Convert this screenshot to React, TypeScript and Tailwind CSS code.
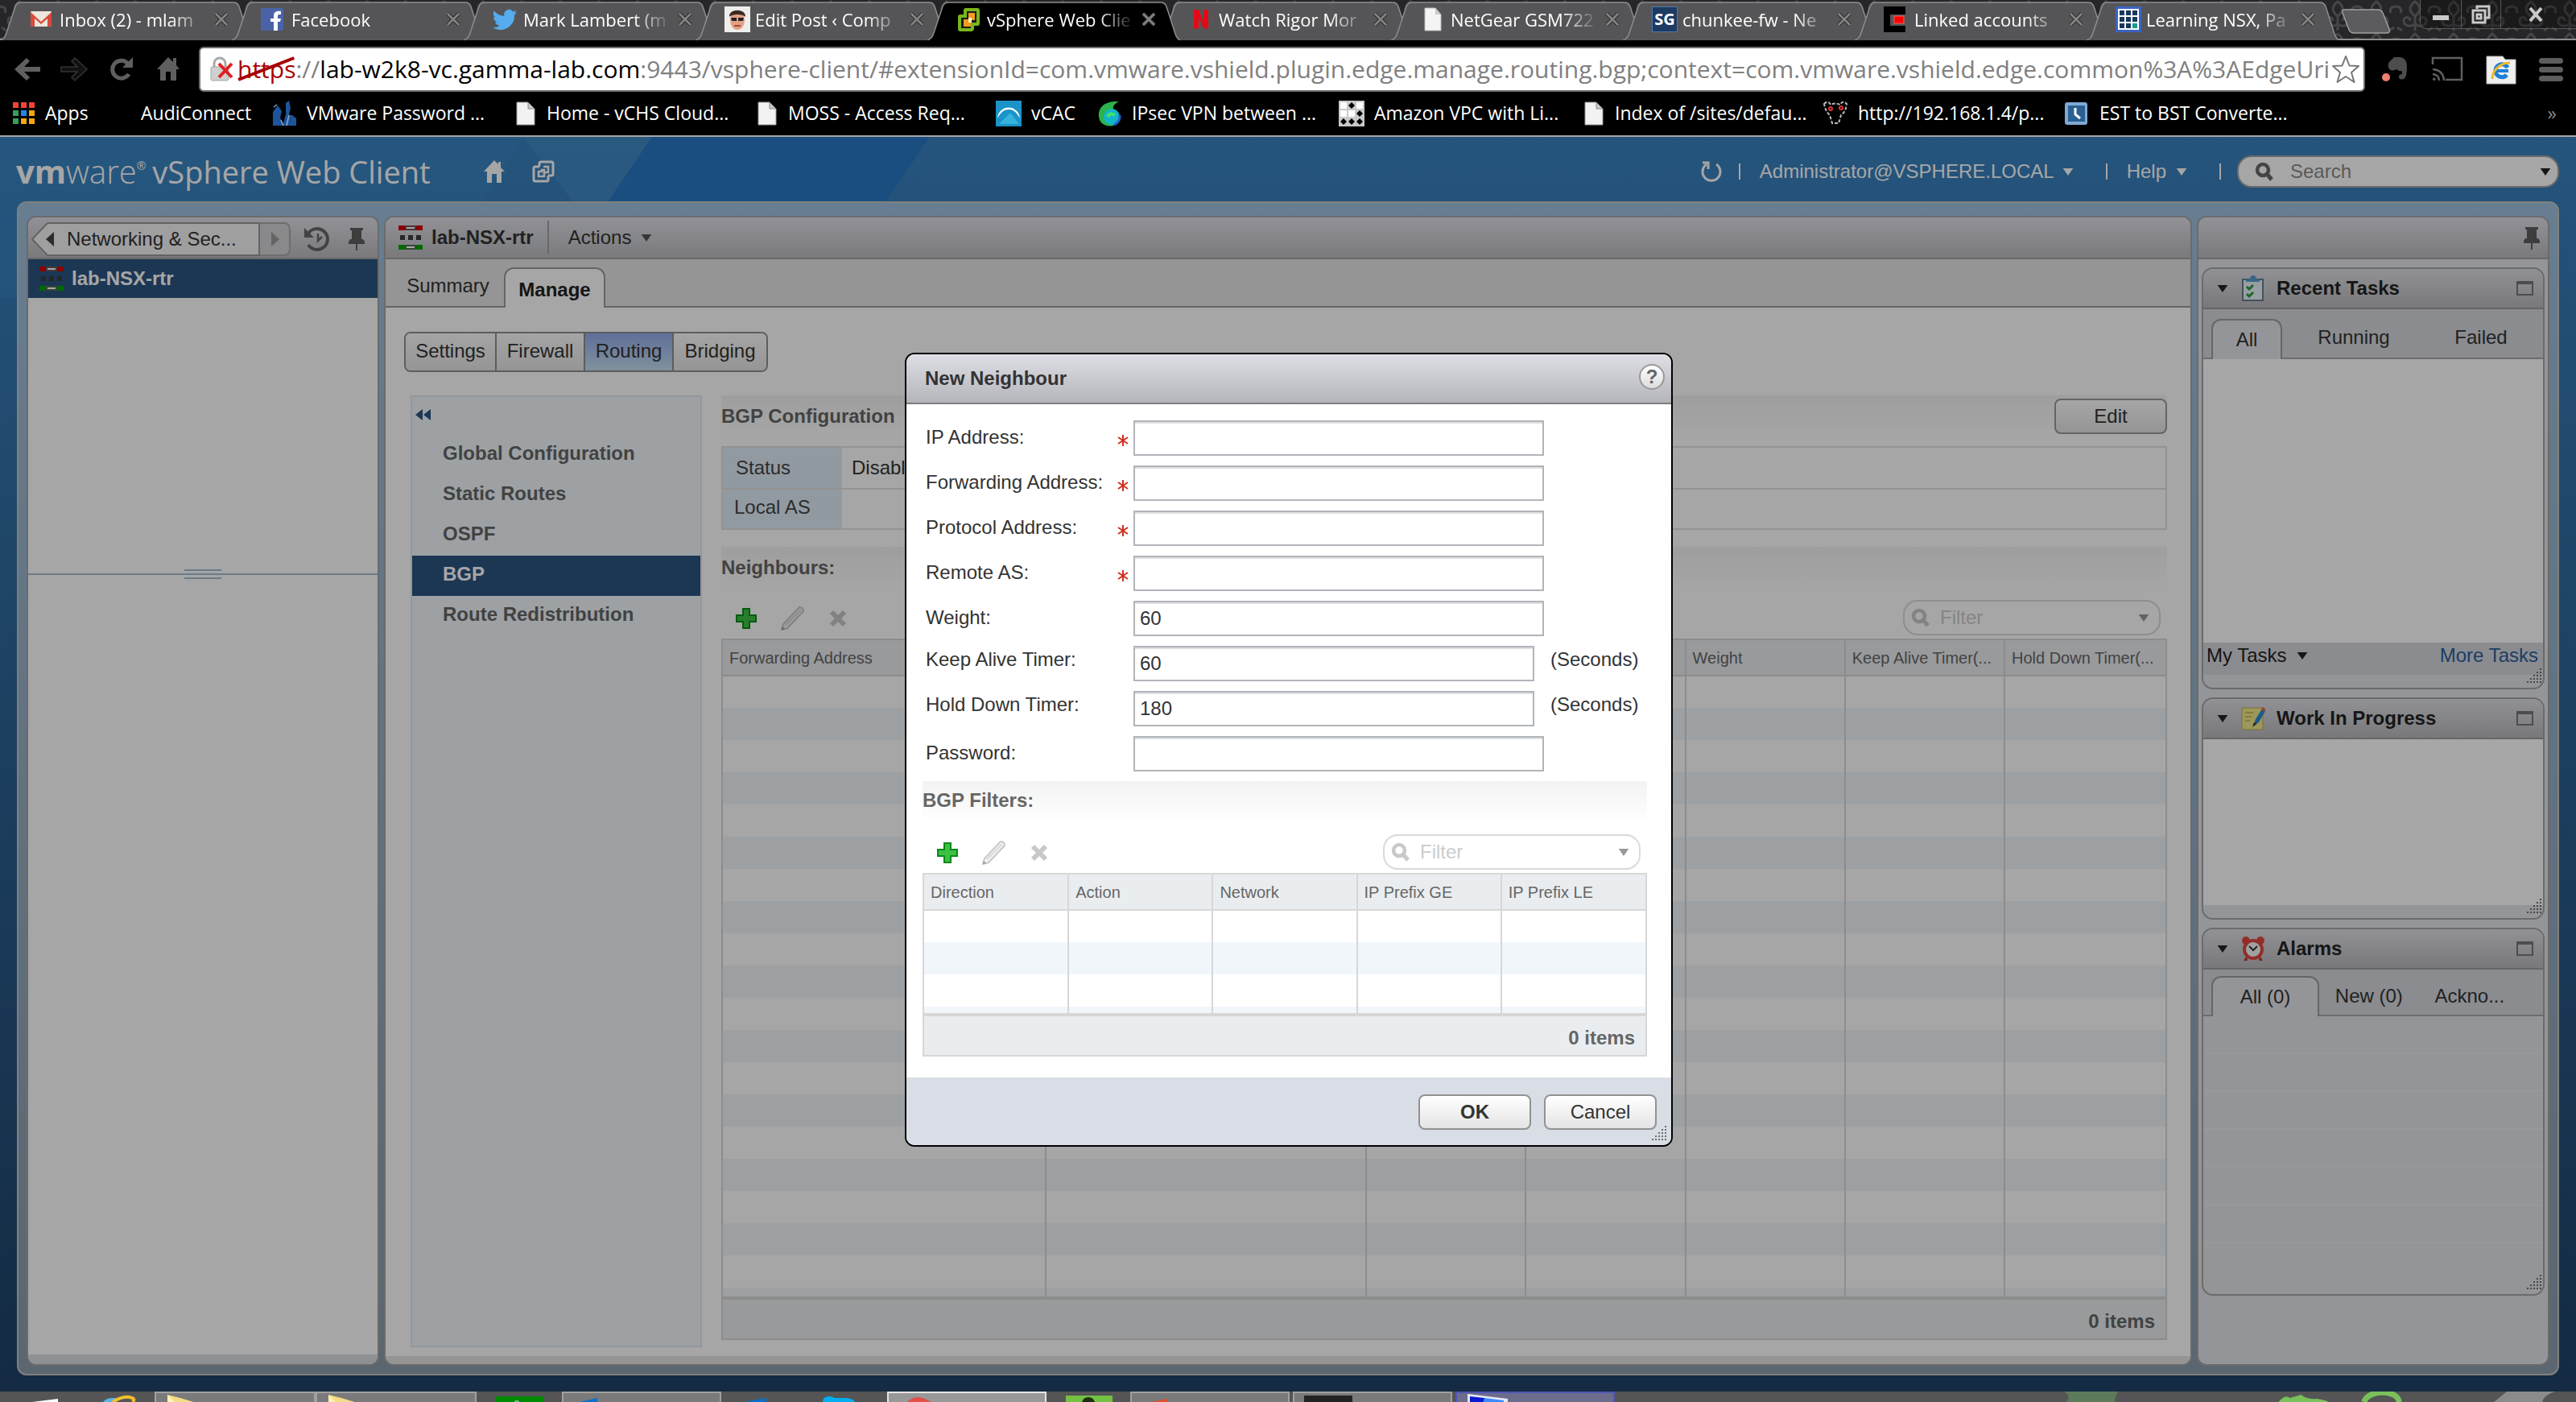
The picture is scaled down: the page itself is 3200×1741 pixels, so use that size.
import type { ReactNode } from "react";
import clsx from "clsx";

/* ---------- shared glyphs ---------- */

function Caret({ className }: { className?: string }) {
  return (
    <svg viewBox="0 0 14 10" className={clsx("h-[9px] w-[14px] shrink-0", className)}>
      <path d="M0 0h14L7 10z" fill="currentColor" />
    </svg>
  );
}

function Magnifier({ className }: { className?: string }) {
  return (
    <svg viewBox="0 0 24 24" className={clsx("h-6 w-6 shrink-0", className)} fill="none" stroke="currentColor">
      <circle cx="10" cy="10" r="7" strokeWidth="4.500" />
      <path d="M15 15l6 7" strokeWidth="5" />
    </svg>
  );
}

function Pin() {
  return (
    <svg viewBox="0 0 20 28" className="h-7 w-5 shrink-0" fill="#5f5f5f">
      <path d="M2 0h16v3h-2v11h2l2 3v3H0v-3l2-3h2V3H2z" />
      <path d="M9 20h2v8H9z" />
    </svg>
  );
}

function Grip({ className }: { className?: string }) {
  const dots = [];
  for (let row = 0; row < 5; row++) {
    for (let col = 4 - row; col < 5; col++) {
      dots.push(<rect key={`${row}-${col}`} x={col * 4} y={row * 4} width="2" height="2" />);
    }
  }
  return (
    <svg viewBox="0 0 20 20" className={clsx("h-5 w-5", className)} fill="#6d6d72">
      {dots}
    </svg>
  );
}

function RouterIcon() {
  return (
    <svg viewBox="0 0 30 32" className="h-8 w-[30px] shrink-0">
      <rect width="30" height="6" y="1" fill="#d40000" />
      <rect x="8" width="14" height="6" y="1" fill="#6b5555" />
      <rect x="10" width="10" height="2" y="3" fill="#fff" />
      <g fill="#3b3b3b">
        <rect x="2" y="13" width="6" height="6" />
        <rect x="12" y="13" width="6" height="6" />
        <rect x="22" y="13" width="6" height="6" />
      </g>
      <rect width="30" height="6" y="25" fill="#00a400" />
      <rect x="8" width="14" height="6" y="25" fill="#556b55" />
      <rect x="10" width="10" height="2" y="27" fill="#fff" />
    </svg>
  );
}

function DocIcon() {
  return (
    <svg viewBox="0 0 24 30" className="mr-[2px] ml-1 h-[30px] w-6 shrink-0">
      <path d="M1 1h14l8 8v20H1z" fill="#f2f2f2" stroke="#9a9a9a" />
      <path d="M15 1v8h8z" fill="#c9c9c9" stroke="#8a8a8a" />
    </svg>
  );
}

/* ---------- browser tabs ---------- */

const tabIcons: Record<string, ReactNode> = {
  gmail: (
    <>
      <rect x="2" y="6" width="26" height="19" rx="1" fill="#ece6dc" />
      <path d="M2 25V7l13 12L28 7v18h-5V15l-8 7-8-7v10z" fill="#d94a3d" />
    </>
  ),
  facebook: (
    <>
      <rect x="0" y="2" width="28" height="28" rx="2" fill="#4a63a8" />
      <path d="M16 30V19h-4v-4h4v-3c0-5 3-7 9-6v4c-3 0-4 0-4 2v3h4l-1 4h-3v11z" fill="#fff" />
    </>
  ),
  twitter: (
    <path
      d="M30 7c-1 .6-2.400 1-3.600 1.100 1.300-.8 2.200-2 2.700-3.400-1.200.7-2.600 1.200-4 1.500a6.200 6.200 0 0 0-10.700 5.700C9 11.600 4.700 9.200 1.800 5.600c-1.600 2.800-.8 6.400 1.900 8.300-1 0-2-.3-2.800-.8 0 3 2.100 5.600 5 6.200-.9.300-1.900.3-2.800.1.800 2.500 3 4.300 5.800 4.300A12.600 12.600 0 0 1 0 26.300 17.700 17.700 0 0 0 27.100 10.600C28.300 9.600 29.300 8.400 30 7z"
      fill="#55acee"
    />
  ),
  avatar: (
    <>
      <rect width="32" height="32" fill="#eeeeec" />
      <ellipse cx="16" cy="17" rx="9" ry="12" fill="#e2a183" />
      <path d="M6 13C5 2 27 2 26 13c-3-4-17-4-20 0z" fill="#3a2a20" />
      <path d="M8 14h7v4H9zM17 14h7l-1 4h-6z" fill="#222" />
      <path d="M12 24h8" stroke="#a44" strokeWidth="2" />
    </>
  ),
  vsphere: (
    <>
      <path d="M12 2h14q3 0 3 3v16q0 3-3 3h-4v3q0 4-4 4H5q-3 0-3-3V13q0-3 3-3h4V5q0-3 3-3z" fill="#7ab51d" />
      <path d="M13 6h12v14h-7v7H6V14h7z" fill="#1b1b1b" />
      <path d="M15 8h8v9h-5v8H9v-9h6z" fill="#f59b1c" />
      <path d="M15 14h4v6h-4z" fill="#fff3c8" />
    </>
  ),
  netflix: <path d="M7 4h6l6 15V4h6v24l-6-1-6-14v14l-6 1z" fill="#e50914" />,
  doc: (
    <>
      <path d="M6 2h13l7 8v20H6z" fill="#f4f4f4" stroke="#bbb" />
      <path d="M19 2v8h7z" fill="#c9c9c9" />
    </>
  ),
  sg: <rect width="32" height="32" fill="#1d3a63" stroke="#5577a5" strokeWidth="2" />,
  linked: (
    <>
      <path d="M0 0h27v10H8v14h19v8H0z" fill="#000" />
      <rect x="13" y="12" width="12" height="9" fill="#fe0000" stroke="#ff5a5a" />
    </>
  ),
  grid: (
    <>
      <rect width="32" height="32" fill="#3b63c4" />
      <rect x="3" y="3" width="26" height="26" fill="#fff" />
      <g fill="#17375e">
        <path d="M5 5h6v6H5zM13 5h6v6h-6zM21 5h6v6h-6zM5 13h6v6H5zM13 13h6v6h-6zM21 13h6v6h-6zM5 21h6v6H5zM13 21h6v6h-6z" />
      </g>
      <rect x="21" y="21" width="6" height="6" fill="#19998f" />
    </>
  ),
};

const tabs = [
  { icon: "gmail", title: "Inbox (2) - mlam" },
  { icon: "facebook", title: "Facebook" },
  { icon: "twitter", title: "Mark Lambert (m" },
  { icon: "avatar", title: "Edit Post ‹ Comp" },
  { icon: "vsphere", title: "vSphere Web Clie", active: true },
  { icon: "netflix", title: "Watch Rigor Mor" },
  { icon: "doc", title: "NetGear GSM722" },
  { icon: "sg", title: "chunkee-fw - Ne" },
  { icon: "linked", title: "Linked accounts" },
  { icon: "grid", title: "Learning NSX, Pa" },
];

function BrowserTab({ icon, title, active }: { icon: string; title: string; active?: boolean }) {
  return (
    <div className={clsx("relative flex h-full w-[288px] shrink-0 items-center pl-9", active && "z-10")}>
      <svg viewBox="0 0 316 50" className="absolute top-0 left-0 h-[50px] w-[316px]">
        <path
          d="M0 50C6 48 7 44 9 38L19 8q2-5 7-5h264q5 0 7 5l11 34q2 6 6 8"
          fill={active ? "#000" : "#555557"}
          stroke="#8d8d8d"
          strokeWidth="1.500"
        />
      </svg>
      <span className="relative h-8 w-8 shrink-0">
        <svg viewBox="0 0 32 32" className="h-8 w-8">
          {tabIcons[icon]}
        </svg>
        {icon === "sg" && (
          <b className="absolute inset-0 text-center text-xl leading-8 text-white">SG</b>
        )}
      </span>
      <span className="relative ml-[6px] w-[184px] text-[22px] leading-8 whitespace-nowrap text-white [mask-image:linear-gradient(to_right,black_75%,transparent)]">
        {title}
      </span>
      <button aria-label="Close tab" className="relative ml-2 shrink-0">
        <svg viewBox="0 0 18 18" className="h-[18px] w-[18px]">
          <path d="M2 2l14 14M16 2L2 16" stroke="#333" strokeWidth="5" />
          <path d="M2 2l14 14M16 2L2 16" stroke="#858585" strokeWidth="2.500" />
        </svg>
      </button>
    </div>
  );
}

function TabStrip() {
  return (
    <div className="relative flex h-[50px] shrink-0 border-b-2 border-[#8d8d8d] bg-[#262628]">
      <svg className="absolute inset-0 h-full w-full">
        <defs>
          <pattern id="damask" width="48" height="40" patternUnits="userSpaceOnUse">
            <g fill="none" stroke="#454548" strokeWidth="3">
              <path d="M24 2c-8 6-8 12 0 18 8-6 8-12 0-18zM24 20v18" />
              <path d="M24 30c-6 4-14 2-14-4s8-6 8 0M24 30c6 4 14 2 14-4s-8-6-8 0" />
              <path d="M0 8c6 0 8 4 6 8M48 8c-6 0-8 4-6 8M2 34l6 4M46 34l-6 4" />
            </g>
          </pattern>
        </defs>
        <rect width="100%" height="100%" fill="url(#damask)" />
      </svg>
      {tabs.map((t) => (
        <BrowserTab key={t.title} {...t} />
      ))}
      <button aria-label="New tab" className="relative ml-7 h-full">
        <svg viewBox="0 0 62 50" className="h-[50px] w-[62px]">
          <path d="M4 12h42q4 0 6 4l8 20q2 5-4 5H16q-4 0-6-4L2 16q-1-4 2-4z" fill="#5c5c5f" stroke="#a0a0a0" strokeWidth="1.500" />
        </svg>
      </button>
      <div className="relative ml-auto flex h-9 items-center rounded-bl-lg border-b border-l border-[#5a5a5a] bg-black/30 text-[#c9c9c9]">
        <button aria-label="Minimize" className="flex h-full w-[50px] items-center justify-center">
          <span className="mt-2 h-[6px] w-5 bg-[#c9c9c9]" />
        </button>
        <button aria-label="Restore" className="flex h-full w-[50px] items-center justify-center border-x border-[#5a5a5a]">
          <svg viewBox="0 0 24 24" className="h-6 w-6" fill="none" stroke="currentColor" strokeWidth="3">
            <path d="M7 5V2h15v14h-4" />
            <rect x="2" y="7" width="15" height="15" />
            <rect x="7" y="12" width="5" height="5" />
          </svg>
        </button>
        <button aria-label="Close" className="flex h-full w-[93px] items-center justify-center pr-2">
          <svg viewBox="0 0 18 18" className="h-[18px] w-[18px]">
            <path d="M2 1l14 16M16 1L2 17" stroke="currentColor" strokeWidth="4" />
          </svg>
        </button>
      </div>
    </div>
  );
}

function Toolbar() {
  return (
    <div className="flex h-16 shrink-0 items-end bg-black pr-4 pl-4 text-[#5f5f5f]">
      <div className="flex h-14 w-[231px] shrink-0 items-center">
        <button aria-label="Back" className="w-[58px]">
          <svg viewBox="0 0 36 32" className="h-8 w-9">
            <path d="M2 16L17 2l4 4-7 7h20v6H14l7 7-4 4z" fill="currentColor" />
          </svg>
        </button>
        <button aria-label="Forward" className="w-[60px]">
          <svg viewBox="0 0 36 32" className="h-8 w-9">
            <path d="M34 16L19 2l-4 4 7 7H2v6h20l-7 7 4 4z" fill="#111" stroke="#333" strokeWidth="1.500" />
          </svg>
        </button>
        <button aria-label="Reload" className="w-[60px]">
          <svg viewBox="0 0 34 32" className="h-8 w-[34px]">
            <path d="M26 22a11 11 0 1 1-1-13" fill="none" stroke="currentColor" strokeWidth="5" />
            <path d="M31 1v13H18z" fill="currentColor" />
          </svg>
        </button>
        <button aria-label="Home">
          <svg viewBox="0 0 30 32" className="h-8 w-[30px]">
            <path d="M15 1L1 16h4v14h7V19h6v11h7V16h4l-4-5V2h-4v5z" fill="currentColor" />
          </svg>
        </button>
      </div>
      <div className="flex h-14 min-w-0 flex-1 items-center rounded-md border-2 border-[#6e6e6e] bg-white pr-1 pl-3">
        <svg viewBox="0 0 30 32" className="h-8 w-[30px] shrink-0">
          <path d="M5 14V9a7 7 0 0 1 14 0v5" fill="none" stroke="#a9a9a9" strokeWidth="3" />
          <rect x="1" y="13" width="22" height="17" rx="2" fill="#cfcfcf" stroke="#a5a5a5" />
          <path d="M11 9l16 17M27 9L11 26" stroke="#e02020" strokeWidth="4" />
        </svg>
        <p className="ml-1 min-w-0 flex-1 text-[30px] leading-10 whitespace-nowrap text-[#808080]">
          <span className="relative text-[#a80000]">
            https
            <svg viewBox="0 0 68 40" className="absolute top-0 left-0 h-10 w-full" preserveAspectRatio="none">
              <path d="M1 34L66 7" stroke="#a80000" strokeWidth="4" />
            </svg>
          </span>
          ://<span className="text-black">lab-w2k8-vc.gamma-lab.com</span>
          :9443/vsphere-client/#extensionId=com.vmware.vshield.plugin.edge.manage.routing.bgp;context=com.vmware.vshield.edge.common%3A%3AEdgeUri
        </p>
        <button aria-label="Bookmark this page" className="shrink-0">
          <svg viewBox="0 0 36 36" className="h-9 w-9">
            <path
              d="M18 2l4.500 11.500L34 14l-9 8 3.500 12L18 27 7.500 34 11 22l-9-8 11.500-.5z"
              fill="#fff"
              stroke="#777"
              strokeWidth="2"
              strokeLinejoin="round"
            />
          </svg>
        </button>
      </div>
      <div className="flex h-14 shrink-0 items-center gap-[28px] pl-5">
        <svg viewBox="0 0 34 34" className="h-[34px] w-[34px]">
          <path d="M10 8l6-6h8q8 1 8 13t-4 14q-6 2-6-3 0-3 4-3v-4q-4 1-7-2-7 4-10-2-1-5 1-7z" fill="#4d4d4d" />
          <circle cx="6" cy="27" r="5" fill="#f08070" />
        </svg>
        <svg viewBox="0 0 40 32" className="h-8 w-10" fill="none" stroke="#5f5f5f" strokeWidth="2.500">
          <path d="M2 10V2h36v27H18" />
          <path d="M2 16q13 1 14 14M2 22q8 1 8 8M2 28h2v2" />
        </svg>
        <svg viewBox="0 0 38 38" className="h-[38px] w-[38px]">
          <path d="M1 3h20l3 4h13v30H1z" fill="#efefef" stroke="#bbb" />
          <path d="M27 17a8 8 0 1 0-1 9" fill="none" stroke="#1c7fd6" strokeWidth="5" />
          <path d="M13 21h15" stroke="#1c7fd6" strokeWidth="4" />
          <path d="M8 31C8 20 18 11 30 11" fill="none" stroke="#efb92a" strokeWidth="3" />
        </svg>
        <button aria-label="Menu" className="flex flex-col gap-1">
          <span className="h-[7px] w-[30px] rounded bg-[#5c5c5c]" />
          <span className="h-[7px] w-[30px] rounded bg-[#5c5c5c]" />
          <span className="h-[7px] w-[30px] rounded bg-[#5c5c5c]" />
        </button>
      </div>
    </div>
  );
}

const appColors = ["#f44336", "#f44336", "#f44336", "#34a05f", "#1e88e5", "#f5a70b", "#34a05f", "#f5a70b", "#f5a70b"];

const bookmarks: { label: string; icon: ReactNode; className: string }[] = [
  {
    label: "Apps",
    className: "w-[119px]",
    icon: (
      <svg viewBox="0 0 28 28" className="h-7 w-7 shrink-0">
        {appColors.map((c, i) => (
          <rect key={i} x={(i % 3) * 10} y={Math.floor(i / 3) * 10} width="7" height="7" fill={c} />
        ))}
      </svg>
    ),
  },
  { label: "AudiConnect", className: "w-[202px]", icon: <span className="w-7" /> },
  {
    label: "VMware Password ...",
    className: "w-[300px]",
    icon: (
      <svg viewBox="0 0 32 32" className="h-8 w-8 shrink-0">
        <path d="M2 31V14l6-8 5 7-2 8 4 10zM14 31l4-14V3l4-3 2 9-2 9h4l5 4v9z" fill="#1d559b" />
        <path d="M3 8l4-3M12 24l3 7M22 18l-3 13" stroke="#8fa9c9" strokeWidth="1.500" />
      </svg>
    ),
  },
  { label: "Home - vCHS Cloud...", className: "w-[300px]", icon: <DocIcon /> },
  { label: "MOSS - Access Req...", className: "w-[300px]", icon: <DocIcon /> },
  {
    label: "vCAC",
    className: "w-[125px]",
    icon: (
      <svg viewBox="0 0 32 32" className="h-8 w-8 shrink-0">
        <rect width="32" height="32" fill="#1b93c9" />
        <path d="M2 22C4 4 28 4 30 22c-5-9-9-11-14-11S6 14 2 22z" fill="#fff" />
        <path d="M4 29l14-14 11 14z" fill="#35b3dd" />
      </svg>
    ),
  },
  {
    label: "IPsec VPN between ...",
    className: "w-[301px]",
    icon: (
      <svg viewBox="0 0 32 32" className="h-8 w-8 shrink-0">
        <path d="M28 1C8 0 2 10 3 20s12 14 20 10 7-16-1-17c-3-5 0-9 6-12z" fill="#2cb24a" />
        <circle cx="19" cy="20" r="10" fill="#12b5c9" />
        <path d="M22 30q8-4 7-12" stroke="#1c62c9" strokeWidth="3" fill="none" />
        <path d="M14 20q3-6 9-2" stroke="#3fe36a" strokeWidth="4" fill="none" />
      </svg>
    ),
  },
  {
    label: "Amazon VPC with Li...",
    className: "w-[301px]",
    icon: (
      <svg viewBox="0 0 32 32" className="h-8 w-8 shrink-0">
        <rect width="32" height="32" fill="#c9c9c9" />
        <path d="M2 2h8v8H2zM22 2h8v8h-8zM2 12h8v8H2zM12 12h8v8h-8z" fill="#fff" />
        <path d="M16 2l4 4-4 4-4-4zM26 12l4 4-4 4-4-4zM6 22l4 4-4 4-4-4zM16 22l4 4-4 4-4-4zM26 22l4 4-4 4-4-4z" fill="#000" />
      </svg>
    ),
  },
  { label: "Index of /sites/defau...", className: "w-[300px]", icon: <DocIcon /> },
  {
    label: "http://192.168.1.4/p...",
    className: "w-[300px]",
    icon: (
      <svg viewBox="0 0 32 32" className="h-8 w-8 shrink-0" fill="none" stroke="#b9b9b9" strokeWidth="2">
        <path d="M2 4q5-5 8 1 6-3 12 0 3-6 8-1-1 10-7 14l-3 10h-8L9 18Q3 12 2 4z" strokeDasharray="4 2" />
        <circle cx="10" cy="10" r="2" stroke="#d33" />
        <circle cx="23" cy="9" r="2" stroke="#d33" />
      </svg>
    ),
  },
  {
    label: "EST to BST Converte...",
    className: "w-[300px]",
    icon: (
      <svg viewBox="0 0 32 32" className="h-8 w-8 shrink-0">
        <rect x="1" y="2" width="28" height="28" rx="3" fill="#7fa9d3" />
        <rect x="5" y="6" width="21" height="20" fill="#2b5f92" />
        <path d="M14 9v8l6 5" stroke="#fff" strokeWidth="3" fill="none" />
      </svg>
    ),
  },
];

function BookmarksBar() {
  return (
    <nav className="flex h-[54px] shrink-0 items-center bg-black pr-6 pb-px pl-4 text-[23px] text-white">
      {bookmarks.map((b) => (
        <a key={b.label} href="#" className={clsx("flex shrink-0 items-center gap-3 whitespace-nowrap", b.className)}>
          {b.icon}
          {b.label}
        </a>
      ))}
      <button className="ml-auto text-[#8a8a8a]">»</button>
    </nav>
  );
}

/* ---------- client header ---------- */

function ClientHeader() {
  return (
    <header className="relative flex h-20 shrink-0 items-center pt-[6px] pr-[21px] pl-5 text-white">
      <h1 className="flex items-center font-['Open_Sans',sans-serif] whitespace-nowrap">
        <span className="text-[40px] leading-10 font-bold">vm</span>
        <span className="text-[40px] leading-10 font-light">ware</span>
        <sup className="text-sm">®</sup>
        <span className="ml-2 text-[38px] leading-10">vSphere Web Client</span>
      </h1>
      <a href="#" aria-label="Home" className="ml-[66px]">
        <svg viewBox="0 0 26 28" className="h-7 w-[26px]" fill="currentColor">
          <path d="M13 0L0 14h4v14h6V17h6v11h6V14h4l-5-5V2h-3v3z" />
        </svg>
      </a>
      <a href="#" aria-label="Windows" className="ml-[34px]">
        <svg viewBox="0 0 28 28" className="h-7 w-7" fill="none" stroke="currentColor" strokeWidth="3">
          <path d="M9 8V4q0-2 2-2h13q2 0 2 2v13q0 2-2 2h-4" />
          <path d="M9 8H4q-2 0-2 2v14q0 2 2 2h14q2 0 2-2v-5" />
          <path d="M14 8h6v7h-4" strokeWidth="2.500" />
          <path d="M8 14v6h7v-8h-3v2z" strokeWidth="2.500" />
        </svg>
      </a>
      <div className="ml-auto flex items-center">
        <button aria-label="Refresh">
          <svg viewBox="0 0 28 28" className="h-7 w-7" fill="none" stroke="currentColor" strokeWidth="3">
            <path d="M20 5a11 11 0 1 1-12 0" />
            <path d="M3 3h7v8" />
          </svg>
        </button>
        <span className="ml-5 h-5 w-[2px] bg-white" />
        <button className="ml-6 flex items-center gap-[10px]">
          Administrator@VSPHERE.LOCAL <Caret />
        </button>
        <span className="ml-10 h-5 w-[2px] bg-white" />
        <button className="ml-6 flex items-center gap-3">
          Help <Caret />
        </button>
        <span className="ml-10 h-5 w-[2px] bg-white" />
        <div className="ml-5 flex h-10 w-[400px] items-center rounded-[18px] border-2 border-[#a5a5a5] bg-white px-2 text-[#555]">
          <Magnifier className="ml-3 text-[#6a6a6a]" />
          <input
            aria-label="Search"
            placeholder="Search"
            className="ml-5 min-w-0 flex-1 bg-transparent outline-none placeholder:text-[#8a8a8a]"
          />
          <Caret className="text-[#222]" />
        </div>
      </div>
    </header>
  );
}

/* ---------- panels ---------- */

const panel = "flex flex-col overflow-hidden rounded-xl border-2 border-[#a5a5a5]";
const panelHead = "flex h-[52px] shrink-0 items-center border-b-2 border-[#a0a0a0] bg-linear-to-b from-[#dfe0e8] to-[#bcbcc0]";
const plainButton = "border-2 bg-linear-to-b from-white to-[#e4e4e4] text-center";

function Navigator() {
  return (
    <aside className={clsx(panel, "w-[438px] shrink-0 bg-white")}>
      <div className={clsx(panelHead, "pt-1 pr-4 pl-1")}>
        <div className="relative flex h-[42px] w-[322px] items-center">
          <svg viewBox="0 0 322 42" preserveAspectRatio="none" className="absolute inset-0 h-full w-full">
            <path d="M283 1h30q8 0 8 8v24q0 8-8 8h-30z" fill="#d3d3d7" stroke="#aaa" strokeWidth="2" />
            <path d="M20 1h263v40H20L1 21z" fill="#f4f4f5" stroke="#999" strokeWidth="2" />
          </svg>
          <button className="relative flex w-[283px] items-center gap-4 pl-[18px] text-[#333]">
            <svg viewBox="0 0 10 18" className="h-[18px] w-[10px]">
              <path d="M10 0v18L0 9z" fill="#444" />
            </svg>
            Networking &amp; Sec...
          </button>
          <button aria-label="Forward" className="relative flex flex-1 justify-center">
            <svg viewBox="0 0 10 18" className="h-[18px] w-[10px]">
              <path d="M0 0v18l10-9z" fill="#999" />
            </svg>
          </button>
        </div>
        <button aria-label="History" className="ml-4">
          <svg viewBox="0 0 34 32" className="h-8 w-[34px]" fill="none" stroke="#666">
            <path d="M6 9a13 13 0 1 1 0 14" strokeWidth="4" />
            <path d="M18 9v9l5-5" strokeWidth="2.500" />
            <path d="M1 2v12h12z" fill="#666" stroke="none" />
          </svg>
        </button>
        <button aria-label="Pin" className="ml-auto">
          <Pin />
        </button>
      </div>
      <a href="#" className="flex h-12 shrink-0 items-center gap-[10px] bg-[#2b5581] pl-[14px] font-bold text-white">
        <RouterIcon />
        lab-NSX-rtr
      </a>
      <div className="h-[337px] shrink-0" />
      <div className="flex h-3 shrink-0 flex-col items-center justify-between">
        <span className="h-[2px] w-[46px] bg-[#a7bed2]" />
        <span className="h-[2px] w-full bg-[#a7bed2]" />
        <span className="h-[2px] w-[46px] bg-[#a7bed2]" />
      </div>
      <div className="flex-1" />
      <div className="h-3 shrink-0 bg-[#dcdde4]" />
    </aside>
  );
}

function FilterBox({ id }: { id: string }) {
  return (
    <div className="flex h-11 w-80 items-center rounded-[18px] border-2 border-[#dadada] bg-white pr-3 pl-[8px] text-[#ccc]">
      <Magnifier className="text-[#c9c9c9]" />
      <input
        id={id}
        aria-label="Filter"
        placeholder="Filter"
        className="ml-3 min-w-0 flex-1 bg-transparent outline-none placeholder:text-[#ccc]"
      />
      <Caret className="text-[#999]" />
    </div>
  );
}

function GridToolbar({ id }: { id: string }) {
  return (
    <div className="flex h-[62px] shrink-0 items-end justify-between pr-2 pb-1 pl-[18px]">
      <div className="flex h-11 items-center gap-[30px] pt-[2px]">
        <button aria-label="Add">
          <svg viewBox="0 0 26 26" className="h-[26px] w-[26px]">
            <path d="M9 1h8v8h8v8h-8v8H9v-8H1V9h8z" fill="#3cc143" stroke="#0b8a1b" strokeWidth="2" />
          </svg>
        </button>
        <button aria-label="Edit">
          <svg viewBox="0 0 30 30" className="h-[30px] w-[30px]">
            <path d="M1 29l2-7L23 1q5 0 5 5L8 27z" fill="#f4f4f4" stroke="#c9c9c9" strokeWidth="2" />
            <path d="M6 23L25 4" stroke="#d9d9d9" strokeWidth="2" />
            <path d="M1 29l1-4 3 3z" fill="#999" />
          </svg>
        </button>
        <button aria-label="Delete">
          <svg viewBox="0 0 22 22" className="h-[22px] w-[22px]">
            <path d="M3 3l16 16M19 3L3 19" stroke="#c8c8c8" strokeWidth="6" />
          </svg>
        </button>
      </div>
      <FilterBox id={id} />
    </div>
  );
}

function DataGrid({ columns, rows, className }: { columns: { label: string; width: string }[]; rows: number; className: string }) {
  return (
    <div className={clsx("flex flex-col border-2 border-[#d7d7d7] text-xl text-[#666]", className)}>
      <div className="min-h-0 flex-1 overflow-hidden bg-white">
        <table className="w-full table-fixed border-collapse">
          <thead>
            <tr className="h-11 border-b-2 border-[#d7d7d7] bg-[#eaedf0]">
              {columns.map((c, i) => (
                <th
                  key={i}
                  className={clsx("border-r-2 border-[#d7d7d7] px-2 text-left font-normal whitespace-nowrap last:border-r-0", c.width)}
                >
                  {c.label}
                </th>
              ))}
            </tr>
          </thead>
          <tbody>
            {Array.from({ length: rows }, (_, r) => (
              <tr key={r} className="h-10 even:bg-[#f1f6fb]">
                {columns.map((_, i) => (
                  <td key={i} className="border-r-2 border-[#d7d7d7] last:border-r-0" />
                ))}
              </tr>
            ))}
          </tbody>
        </table>
      </div>
      <div className="flex h-[52px] shrink-0 items-center justify-end border-t-4 border-[#d7d7d7] bg-[#eaedf0] pt-[6px] pr-[13px] text-2xl font-bold">
        0 items
      </div>
    </div>
  );
}

const neighbourColumns = [
  { label: "Forwarding Address", width: "w-[22.4%]" },
  { label: "", width: "w-[22.2%]" },
  { label: "", width: "w-[11.06%]" },
  { label: "", width: "w-[11.06%]" },
  { label: "Weight", width: "w-[11.06%]" },
  { label: "Keep Alive Timer(...", width: "w-[11.06%]" },
  { label: "Hold Down Timer(...", width: "w-[11.16%]" },
];

const sections = ["Global Configuration", "Static Routes", "OSPF", "BGP", "Route Redistribution"];

function Workspace() {
  return (
    <section className={clsx(panel, "min-w-0 flex-1 bg-white")}>
      <div className={clsx(panelHead, "pl-4")}>
        <RouterIcon />
        <b className="ml-[11px] text-[#333]">lab-NSX-rtr</b>
        <span className="ml-[17px] h-[42px] w-[2px] bg-[#a2a2a6]" />
        <button className="ml-6 flex items-center gap-3 text-[#333]">
          Actions <Caret className="text-[#555]" />
        </button>
      </div>
      <div className="flex h-[60px] shrink-0 items-end bg-[#e5e5e5]">
        <a href="#" className="flex h-full w-[147px] items-center justify-center border-b-2 border-[#9d9d9d] pt-2 pl-2 text-[#333]">
          Summary
        </a>
        <a
          href="#"
          className="flex h-[50px] w-[126px] items-center justify-center rounded-t-xl border-2 border-b-0 border-[#9d9d9d] bg-white pt-1 font-bold text-[#222]"
        >
          Manage
        </a>
        <span className="h-full flex-1 border-b-2 border-[#9d9d9d]" />
      </div>

      <div className="flex min-h-0 flex-1 flex-col pt-[30px] pr-[29px] pb-[11px] pl-[23px]">
        <div className="flex h-[50px] w-[452px] shrink-0 divide-x-2 divide-[#909090] overflow-hidden rounded-lg border-2 border-[#909090] text-[#333]">
          <button className="w-[113px] bg-linear-to-b from-[#fdfdfd] to-[#e6e6e6] pb-[2px]">Settings</button>
          <button className="w-[110px] bg-linear-to-b from-[#fdfdfd] to-[#e6e6e6] pb-[2px]">Firewall</button>
          <button className="w-[110px] bg-linear-to-b from-[#94abea] to-[#c5dff2] pb-[2px]">Routing</button>
          <button className="flex-1 bg-linear-to-b from-[#fdfdfd] to-[#e6e6e6] pb-[2px]">Bridging</button>
        </div>

        <div className="mt-[29px] flex min-h-0 flex-1 pl-2">
          <nav className="w-[362px] shrink-0 border-2 border-[#e3e7ef] bg-[#f1f8fc] font-bold text-[#666]">
            <button aria-label="Collapse" className="flex h-[47px] items-center pb-1 pl-1 text-[#2b5581]">
              <svg viewBox="0 0 20 14" className="h-[14px] w-5" fill="currentColor">
                <path d="M9 0v14L0 7zM19 0v14l-9-7z" />
              </svg>
            </button>
            {sections.map((s) => (
              <a
                key={s}
                href="#"
                className={clsx("flex h-[50px] items-center pb-1 pl-[38px]", s === "BGP" && "bg-[#2b5581] text-white")}
              >
                {s}
              </a>
            ))}
          </nav>

          <div className="mb-[9px] ml-6 flex min-w-0 flex-1 flex-col text-[#333]">
            <div className="flex h-[52px] shrink-0 items-center justify-between bg-linear-to-b from-[#f3f3f3] to-white">
              <h2 className="font-bold text-[#666]">BGP Configuration</h2>
              <button className={clsx(plainButton, "h-11 w-[140px] rounded-lg border-[#9a9a9a]")}>Edit</button>
            </div>
            <table className="mt-[11px] w-full shrink-0 border-collapse border-2 border-[#e0e0e0]">
              <tbody>
                <tr className="h-[52px] border-2 border-[#e0e0e0]">
                  <th className="w-[149px] bg-[#e1edf8] pl-4 text-left font-normal text-[#444]">Status</th>
                  <td className="pl-3">Disabled</td>
                </tr>
                <tr className="h-[50px]">
                  <th className="bg-[#e1edf8] pb-1 pl-[14px] text-left font-normal text-[#444]">Local AS</th>
                  <td />
                </tr>
              </tbody>
            </table>
            <div className="mt-[21px] flex h-[52px] shrink-0 items-center bg-linear-to-b from-[#f3f3f3] to-white pb-px">
              <h2 className="font-bold text-[#666]">Neighbours:</h2>
            </div>
            <GridToolbar id="neighbour-filter" />
            <DataGrid columns={neighbourColumns} rows={20} className="min-h-0 flex-1" />
          </div>
        </div>
      </div>
      <div className="h-[10px] shrink-0 bg-[#e4e4e4]" />
    </section>
  );
}

/* ---------- right-hand portlets ---------- */

function Portlet({ title, icon, className, children }: { title: string; icon: ReactNode; className: string; children: ReactNode }) {
  return (
    <section className={clsx("relative flex shrink-0 flex-col overflow-hidden rounded-[14px] border-2 border-[#a5a5a5] bg-[#e4e5eb]", className)}>
      <div className="flex h-[50px] shrink-0 items-center border-b-2 border-[#9d9d9d] bg-linear-to-b from-[#dfe0e6] to-[#bababd] pr-3 pl-[17px]">
        <Caret className="text-[#222]" />
        <svg viewBox="0 0 30 32" className="ml-4 h-8 w-[30px]">
          {icon}
        </svg>
        <h3 className="ml-[14px] font-bold text-[#222]">{title}</h3>
        <button aria-label={`Maximize ${title}`} className="ml-auto h-[18px] w-[21px] border-2 border-t-4 border-[#777]" />
      </div>
      {children}
      <Grip className="absolute right-0 bottom-1" />
    </section>
  );
}

function PortletTabs({ tabs, strip, first, rest }: { tabs: string[]; strip: string; first: string; rest: string }) {
  return (
    <div className={clsx("flex shrink-0 items-end bg-[#d6d7de] text-[#333]", strip)}>
      <span className="w-[10px] border-b-2 border-[#a8a8ac]" />
      <a href="#" className={clsx("flex h-[50px] items-center justify-center rounded-t-xl border-2 border-b-0 border-[#9d9d9d] bg-[#e4e5eb]", first)}>
        {tabs[0]}
      </a>
      <div className={clsx("flex h-full flex-1 items-center justify-around border-b-2 border-[#a8a8ac] pt-[10px]", rest)}>
        {tabs.slice(1).map((t) => (
          <a key={t} href="#">
            {t}
          </a>
        ))}
      </div>
    </div>
  );
}

function Portlets() {
  return (
    <aside className={clsx(panel, "w-[438px] shrink-0 bg-[#e4e5eb]")}>
      <div className={clsx(panelHead, "justify-end pt-[2px] pr-[10px]")}>
        <button aria-label="Pin">
          <Pin />
        </button>
      </div>
      <div className="flex flex-1 flex-col gap-[10px] px-1 pt-[10px]">
        <Portlet
          title="Recent Tasks"
          className="h-[524px]"
          icon={
            <>
              <rect x="2" y="5" width="25" height="26" fill="#e8f4fb" stroke="#6b7f8c" strokeWidth="2" />
              <path d="M6 8h17V5h-4q0-5-4-5t-4 5H6z" fill="#57a0cc" />
              <path d="M7 14l3 3 5-5M7 23l3 3 5-5" stroke="#2b9a3b" strokeWidth="3" fill="none" />
            </>
          }
        >
          <PortletTabs tabs={["All", "Running", "Failed"]} strip="h-[62px]" first="w-[88px]" rest="pr-1 pl-1" />
          <div className="flex-1 bg-white" />
          <div className="flex h-10 items-start justify-between bg-[#d6d7de] pr-[6px] pl-1">
            <button className="flex items-center gap-3 text-[#222]">
              My Tasks <Caret />
            </button>
            <a href="#" className="text-[#2c609b]">
              More Tasks
            </a>
          </div>
          <div className="h-4 shrink-0" />
        </Portlet>
        <Portlet
          title="Work In Progress"
          className="h-[276px]"
          icon={
            <>
              <rect x="1" y="3" width="26" height="27" fill="#f2e98b" stroke="#b5ad5c" />
              <path d="M5 9h10M5 14h8M5 19h6" stroke="#c9bd5c" strokeWidth="2" />
              <path d="M15 26l3-9L26 4l4 3-8 14z" fill="#2c8bd1" />
              <path d="M25 5l2-3 4 3-2 3z" fill="#e06a5a" />
              <path d="M14 27l2-6 3 2z" fill="#333" />
            </>
          }
        >
          <div className="flex-1 bg-white" />
          <div className="h-4 shrink-0" />
        </Portlet>
        <Portlet
          title="Alarms"
          className="h-[457px]"
          icon={
            <>
              <circle cx="6" cy="6" r="5" fill="#e0483f" />
              <circle cx="24" cy="6" r="5" fill="#e0483f" />
              <path d="M7 24l-4 7h5zM23 24l4 7h-5z" fill="#c43a32" />
              <circle cx="15" cy="17" r="13" fill="#e0483f" />
              <circle cx="15" cy="17" r="9" fill="#f7f7f7" />
              <path d="M10 13l5 5 5-5" stroke="#333" strokeWidth="2" fill="none" />
            </>
          }
        >
          <PortletTabs tabs={["All (0)", "New (0)", "Ackno..."]} strip="h-[58px]" first="w-[134px]" rest="pr-7" />
          {Array.from({ length: 6 }, (_, i) => (
            <div key={i} className="h-[47px] shrink-0 border-b-2 border-[#eaeaee]" />
          ))}
        </Portlet>
      </div>
    </aside>
  );
}

/* ---------- New Neighbour dialog ---------- */

const fields = [
  { id: "ip", label: "IP Address:", required: true, value: "" },
  { id: "forwarding", label: "Forwarding Address:", required: true, value: "" },
  { id: "protocol", label: "Protocol Address:", required: true, value: "" },
  { id: "remote-as", label: "Remote AS:", required: true, value: "" },
  { id: "weight", label: "Weight:", value: "60" },
  { id: "keep-alive", label: "Keep Alive Timer:", value: "60", unit: "(Seconds)" },
  { id: "hold-down", label: "Hold Down Timer:", value: "180", unit: "(Seconds)" },
  { id: "password", label: "Password:", value: "" },
];

const filterColumns = ["Direction", "Action", "Network", "IP Prefix GE", "IP Prefix LE"].map((label) => ({
  label,
  width: "w-1/5",
}));

function Asterisk() {
  return (
    <svg viewBox="0 0 14 14" className="mt-[6px] h-[14px] w-[14px]" stroke="#d0301f" strokeWidth="2">
      <path d="M7 0v14M1 3l12 8M13 3L1 11" />
    </svg>
  );
}

function NewNeighbourDialog() {
  return (
    <div
      role="dialog"
      aria-labelledby="dialog-title"
      className="relative w-[954px] overflow-hidden rounded-xl border-2 border-black bg-white text-[#333]"
    >
      <div className="flex h-[62px] items-center justify-between border-b-2 border-[#7e7e7e] bg-linear-to-b from-[#dfe0e6] to-[#b4b5ba] pr-2 pl-[23px]">
        <h2 id="dialog-title" className="font-bold">
          New Neighbour
        </h2>
        <button
          aria-label="Help"
          className="mb-1 h-8 w-8 rounded-full border-2 border-[#999] bg-linear-to-b from-white to-[#dcdcdc] leading-7 font-bold text-[#666]"
        >
          ?
        </button>
      </div>

      <form className="px-5">
        <div className="flex flex-col gap-3 pt-5 pb-3">
          {fields.map((f) => (
            <div key={f.id} className="flex h-11 pl-1">
              <label htmlFor={f.id} className={clsx("w-[238px] shrink-0", f.unit ? "pt-px" : "pt-[5px]")}>
                {f.label}
              </label>
              <span className="flex w-5 shrink-0 items-center">{f.required && <Asterisk />}</span>
              <input
                id={f.id}
                defaultValue={f.value}
                className={clsx(
                  "h-11 rounded-none border-2 border-[#b1b5ba] bg-white px-[6px] shadow-[inset_0_2px_0_#dedfe1] outline-none",
                  f.unit ? "w-[498px]" : "w-[510px]",
                )}
              />
              {f.unit && <span className="pt-px pl-5">{f.unit}</span>}
            </div>
          ))}
        </div>

        <div className="mr-[10px]">
          <h3 className="h-[52px] bg-linear-to-b from-[#f3f3f3] to-white pt-2 font-bold text-[#666]">BGP Filters:</h3>
          <GridToolbar id="bgp-filter" />
          <DataGrid columns={filterColumns} rows={4} className="h-[228px]" />
        </div>
      </form>

      <div className="mt-[26px] flex h-[84px] items-center justify-end gap-4 bg-[#d9dde5] pt-[2px] pr-[18px]">
        <button className={clsx(plainButton, "h-11 w-[140px] rounded-lg border-[#929292] font-bold")}>OK</button>
        <button className={clsx(plainButton, "h-11 w-[140px] rounded-lg border-[#929292]")}>Cancel</button>
      </div>
      <Grip className="absolute right-1 bottom-1" />
    </div>
  );
}

/* ---------- desktop taskbar ---------- */

const taskButton = "h-full shrink-0 border-2 border-b-0 border-[#a0a0a0] bg-[#7a7a7a] pl-3";

function Taskbar() {
  return (
    <footer className="flex h-[13px] shrink-0 overflow-hidden bg-[#555]">
      <div className="flex w-[192px] shrink-0">
        <svg viewBox="0 0 192 13" className="h-[13px] w-[192px]">
          <path d="M40 13l32-4v4z" fill="#fff" />
          <path d="M128 13q4-5 12-5h14q-6 0-10 5z" fill="#5ab4e8" />
          <path d="M140 13q14-9 24-5 4 1 1 5" fill="none" stroke="#f3c02c" strokeWidth="4" />
        </svg>
      </div>
      {[0, 1].map((i) => (
        <div key={i} className={clsx(taskButton, "w-[200px]")}>
          <svg viewBox="0 0 40 12" className="h-3 w-10">
            <path d="M2 2l16 4 20 6H2z" fill="#f3dc85" />
            <path d="M2 2l10 10H2z" fill="#fdf2b5" />
          </svg>
        </div>
      ))}
      <div className="w-[106px] shrink-0 pl-6">
        <svg viewBox="0 0 60 13" className="h-[13px] w-[60px]">
          <rect y="6" width="60" height="7" fill="#008a00" />
          <path d="M24 13v-1h4v1" stroke="#fff" />
        </svg>
      </div>
      <div className={clsx(taskButton, "w-[198px]")}>
        <svg viewBox="0 0 40 12" className="h-3 w-10">
          <path d="M4 12L30 6v6z" fill="#0a6fc9" />
        </svg>
      </div>
      <div className="w-[206px] shrink-0">
        <svg viewBox="0 0 206 13" className="h-[13px] w-[206px]">
          <path d="M28 13l28-5v5z" fill="#0a6fc9" />
          <path d="M126 13q0-7 8-7 5 0 6 2h12q12 0 14 5z" fill="#00aff0" />
        </svg>
      </div>
      <div className="h-full w-[198px] shrink-0 border-2 border-b-0 border-[#e5e5e5] bg-[#999] pl-5">
        <svg viewBox="0 0 40 12" className="h-3 w-10">
          <path d="M2 12Q8 5 16 5t18 7z" fill="#e3504a" />
        </svg>
      </div>
      <div className="w-[104px] shrink-0 pl-6">
        <svg viewBox="0 0 58 13" className="h-[13px] w-[58px]">
          <rect y="5" width="58" height="8" fill="#74c043" />
          <path d="M20 13q2-6 8-6t8 6z" fill="#1d2d12" />
        </svg>
      </div>
      <div className={clsx(taskButton, "w-[198px]")}>
        <svg viewBox="0 0 40 12" className="h-3 w-10">
          <path d="M6 12l26-5v5z" fill="#d9532c" />
        </svg>
      </div>
      <div className={clsx(taskButton, "ml-1 w-[198px]")}>
        <svg viewBox="0 0 60 12" className="h-3 w-[60px]">
          <rect y="3" width="60" height="9" fill="#222" />
        </svg>
      </div>
      <div className="ml-1 h-full w-[198px] shrink-0 border-2 border-b-0 border-[#5055b5] bg-[#6c6c8c] pl-3">
        <svg viewBox="0 0 52 12" className="h-3 w-[52px]">
          <path d="M1 1l50 6v5H1z" fill="#e8e8f5" />
          <path d="M4 4l18 2v6H4z" fill="#0a1ad0" />
          <path d="M22 6l24 3v3H20z" fill="#3c8cff" />
        </svg>
      </div>
      <svg viewBox="0 0 1196 13" preserveAspectRatio="none" className="h-[13px] min-w-0 flex-1">
        <path d="M560 0h66q-4 8-4 13h-60q6-6-2-13z" fill="#5d7a5a" />
        <path d="M826 13q8-10 14-5l14-4q6 6 20 5 12 2 14 4z" fill="#7ac15c" />
        <path d="M932 13q4-10 20-12 22 0 24 12" fill="none" stroke="#7ac15c" strokeWidth="7" />
        <path d="M1110 0h60q-14 4-16 13h-60z" fill="#8b8b8b" />
      </svg>
    </footer>
  );
}

export default function App() {
  return (
    <div className="flex h-screen flex-col overflow-hidden font-['Liberation_Sans',Arial,sans-serif] text-2xl">
      <div className="shrink-0 font-['Open_Sans',sans-serif]">
        <TabStrip />
        <Toolbar />
        <BookmarksBar />
      </div>

      <main className="relative flex min-h-0 flex-1 flex-col border-t-2 border-white bg-linear-to-b from-[#3982c0] to-[#1f4267] pb-5">
        <svg viewBox="0 0 3200 200" preserveAspectRatio="none" className="absolute top-0 left-0 h-[200px] w-full">
          <path d="M0 0h650l-50 80v120H0z" fill="#3b8dcb" opacity=".35" />
          <path d="M650 0h160l-75 110z" fill="#4590c8" opacity=".6" />
          <path d="M810 0h345l-75 110H735z" fill="#2878c5" />
        </svg>
        <ClientHeader />
        <div className="relative mx-[21px] flex min-h-0 flex-1 gap-[6px] rounded-xl border-2 border-[#c5c5c0] bg-linear-to-b from-[#9fc1df] to-[#8c9dac] px-[10px] pt-4 pb-[10px]">
          <Navigator />
          <Workspace />
          <Portlets />
        </div>
        <div className="absolute inset-x-0 -top-[2px] bottom-0 z-10 flex items-start justify-center bg-black/35 pt-[270px] pl-[2px]">
          <NewNeighbourDialog />
        </div>
      </main>

      <Taskbar />
    </div>
  );
}
